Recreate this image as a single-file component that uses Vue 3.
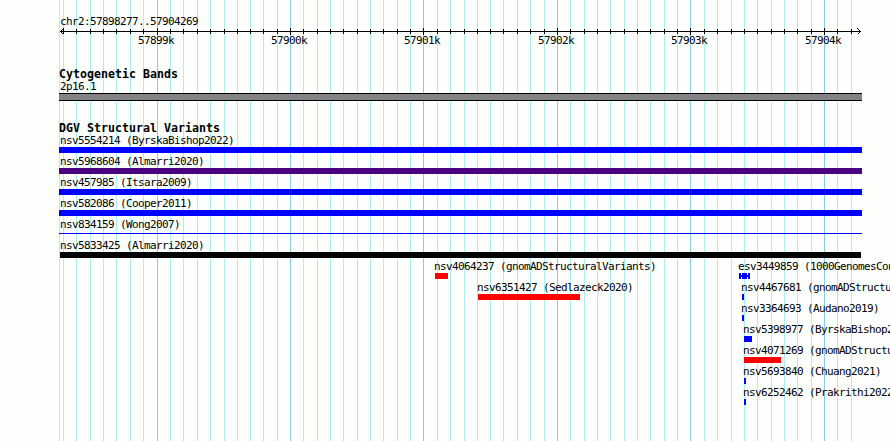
<script setup>
const grid = [
  63, 76, 90, 103, 116, 130, 143, 157, 170, 183, 197, 210, 224, 237, 250, 263, 277,
  290, 303, 317, 330, 343, 357, 370, 383, 397, 410, 423, 437, 450, 464, 477, 490,
  503, 517, 530, 544, 557, 570, 584, 597, 610, 624, 637, 650, 664, 677, 690, 704,
  717, 731, 744, 757, 771, 784, 797, 811, 824, 837, 851,
];

const majors = [
  { x: 157, label: '57899k' },
  { x: 290, label: '57900k' },
  { x: 423, label: '57901k' },
  { x: 557, label: '57902k' },
  { x: 690, label: '57903k' },
  { x: 824, label: '57904k' },
];

const isMajor = (x) => majors.some((m) => m.x === x);

const variants = [
  { id: 'nsv5554214', study: 'ByrskaBishop2022', start: 59, width: 803, color: '#0000ff' },
  { id: 'nsv5968604', study: 'Almarri2020', start: 59, width: 803, color: '#4b0082' },
  { id: 'nsv457985', study: 'Itsara2009', start: 59, width: 803, color: '#0000ff' },
  { id: 'nsv582086', study: 'Cooper2011', start: 59, width: 803, color: '#0000ff' },
  { id: 'nsv834159', study: 'Wong2007', start: 59, width: 803, color: '#0000ff', type: 'thin' },
  { id: 'nsv5833425', study: 'Almarri2020', start: 60, width: 801, color: '#000000' },
  { id: 'nsv4064237', study: 'gnomADStructuralVariants', start: 435, width: 13, color: '#ff0000' },
  { id: 'nsv6351427', study: 'Sedlazeck2020', start: 478, width: 102, color: '#ff0000' },
];

// second stack, starts on the same row as nsv4064237
const rightVariants = [
  { id: 'esv3449859', study: '1000GenomesCon', start: 739, width: 11, color: '#0000ff', type: 'split' },
  { id: 'nsv4467681', study: 'gnomADStructu', start: 742, width: 2, color: '#0000ff' },
  { id: 'nsv3364693', study: 'Audano2019)', start: 742, width: 2, color: '#0000ff' },
  { id: 'nsv5398977', study: 'ByrskaBishop2', start: 744, width: 8, color: '#0000ff' },
  { id: 'nsv4071269', study: 'gnomADStructu', start: 744, width: 37, color: '#ff0000' },
  { id: 'nsv5693840', study: 'Chuang2021)', start: 744, width: 2, color: '#0000ff' },
  { id: 'nsv6252462', study: 'Prakrithi2022', start: 744, width: 2, color: '#0000ff' },
];

const columns = [
  { name: 'main', items: variants.map((v) => ({ ...v, study: v.study + ')' })) },
  { name: 'right', items: rightVariants },
];
</script>

<template>
  <div class="browser">
    <svg class="grid" width="890" height="441" shape-rendering="crispEdges">
      <rect x="59" y="0" width="1" height="441" class="minor" />
      <rect
        v-for="x in grid"
        :key="x"
        :x="x"
        y="0"
        width="1"
        height="441"
        :class="isMajor(x) ? 'major' : 'minor'"
      />
    </svg>

    <header class="ruler">
      <div class="region">chr2:57898277..57904269</div>
      <svg class="axis" width="890" height="22" shape-rendering="crispEdges">
        <rect x="60" y="5" width="801" height="1" />
        <rect
          v-for="x in grid"
          :key="x"
          :x="x"
          :y="isMajor(x) ? 2 : 3"
          width="1"
          :height="isMajor(x) ? 7 : 5"
        />
        <path d="M63.5 2.5L60.5 5.5L63.5 8.5M857.5 2.5L860.5 5.5L857.5 8.5" />
        <text v-for="m in majors" :key="m.label" :x="m.x - 19" y="18">{{ m.label }}</text>
      </svg>
    </header>

    <section class="bands">
      <h2>Cytogenetic Bands</h2>
      <div class="label band-label">2p16.1</div>
      <div class="band"></div>
    </section>

    <section class="variants">
      <h2>DGV Structural Variants</h2>
      <div class="columns">
        <div v-for="col in columns" :key="col.name" :class="['column', col.name]">
          <div
            v-for="v in col.items"
            :key="v.id"
            class="variant"
            :style="{ marginLeft: v.start + 'px' }"
          >
            <div class="label">{{ v.id }} ({{ v.study }}</div>
            <div :class="['bar', v.type]" :style="{ width: v.width + 'px', color: v.color }"></div>
          </div>
        </div>
      </div>
    </section>
  </div>
</template>

<style>
body {
  background: #fdfffc;
}
</style>

<style scoped>
.browser {
  position: relative;
  width: 890px;
  height: 441px;
  overflow: hidden;
  background: #fdfffc;
  color: #000;
  font: 11px/14px "DejaVu Sans Mono", monospace;
  letter-spacing: -0.622px;
}

.grid {
  position: absolute;
  top: 0;
  left: 0;
}

.minor {
  fill: #afeeee;
}

.major {
  fill: #87ceeb;
}

.ruler,
.bands,
.variants {
  position: relative;
}

.ruler {
  height: 68px;
  padding-top: 15px;
  box-sizing: border-box;
}

.region {
  height: 11px;
  margin-left: 60px;
}

.axis {
  display: block;
}

.axis path {
  fill: none;
  stroke: #000;
}

h2 {
  height: 12px;
  margin: 0 0 0 59px;
  font-size: 11.6px;
  line-height: 12px;
  letter-spacing: 0.016px;
}

.bands {
  height: 54px;
}

.band-label {
  height: 13px;
  margin-left: 60px;
}

.band {
  width: 803px;
  height: 8px;
  margin-left: 59px;
  box-sizing: border-box;
  border: solid #000;
  border-width: 1px 0;
  background: #848284;
}

.columns {
  display: grid;
}

.column {
  grid-area: 1 / 1;
}

.right {
  margin-top: 126px;
}

.variant {
  height: 21px;
  white-space: nowrap;
}

.variant .label {
  height: 13px;
  padding-left: 1px;
}

.main .variant:nth-child(6) .label {
  padding-left: 0;
}

.right .label,
.main .variant:nth-child(n + 7) .label {
  margin-left: -1px;
  padding-left: 0;
}

.bar {
  height: 6px;
  background: currentColor;
}

.thin {
  height: 1px;
  margin-top: 2px;
}

.split {
  background: linear-gradient(currentColor, currentColor) 0 2px / 100% 2px no-repeat,
    linear-gradient(90deg, currentColor 2px, transparent 2px 3px, currentColor 3px 8px, transparent 8px 9px, currentColor 9px);
}
</style>
